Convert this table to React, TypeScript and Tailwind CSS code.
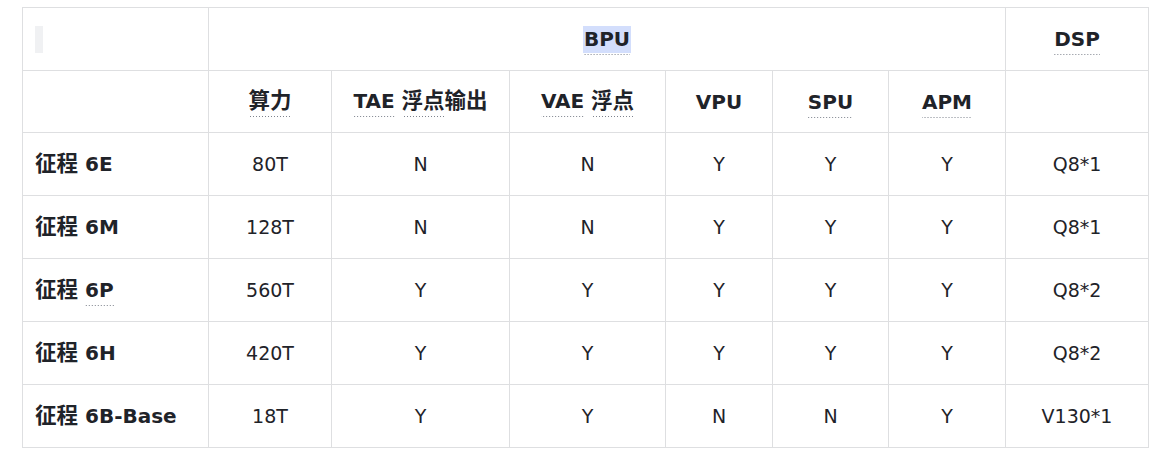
import type { ReactNode } from 'react';

// SoC spec matrix: BPU sub-units + DSP per chip.

type Row = {
  name: ReactNode;
  tops: string;
  tae: string;
  vae: string;
  vpu: string;
  spu: string;
  apm: string;
  dsp: string;
};

// the Han glyphs sit a touch larger than the Latin run in the source table
function Han({ children }: { children: ReactNode }): JSX.Element {
  return <span className="text-[21.5px]">{children}</span>;
}

function Dotted({ children }: { children: ReactNode }): JSX.Element {
  return (
    <span className="bg-[linear-gradient(to_right,#7d828c_1px,transparent_1px)] bg-[length:3px_1px] bg-bottom bg-repeat-x pb-[4px]">
      {children}
    </span>
  );
}

const chip = (suffix: ReactNode): ReactNode => (
  <>
    <Han>征程</Han> {suffix}
  </>
);

const ROWS: Row[] = [
  { name: chip('6E'), tops: '80T', tae: 'N', vae: 'N', vpu: 'Y', spu: 'Y', apm: 'Y', dsp: 'Q8*1' },
  { name: chip('6M'), tops: '128T', tae: 'N', vae: 'N', vpu: 'Y', spu: 'Y', apm: 'Y', dsp: 'Q8*1' },
  { name: chip(<Dotted>6P</Dotted>), tops: '560T', tae: 'Y', vae: 'Y', vpu: 'Y', spu: 'Y', apm: 'Y', dsp: 'Q8*2' },
  { name: chip('6H'), tops: '420T', tae: 'Y', vae: 'Y', vpu: 'Y', spu: 'Y', apm: 'Y', dsp: 'Q8*2' },
  { name: chip('6B-Base'), tops: '18T', tae: 'Y', vae: 'Y', vpu: 'N', spu: 'N', apm: 'Y', dsp: 'V130*1' },
];

const cell = 'border border-[#dedfe1] text-center align-middle';
const head = 'border border-[#dedfe1] text-center align-middle text-[20px] font-bold';

export default function App(): JSX.Element {
  return (
    <div className="min-h-[461px] bg-white pl-[22px] pt-[7px] font-['DejaVu_Sans','Noto_Sans_CJK_SC',sans-serif] text-[19px] text-[#1f2329]">
      <table className="w-[1126px] table-fixed border-collapse">
        <colgroup>
          <col className="w-[186px]" />
          <col className="w-[123px]" />
          <col className="w-[178px]" />
          <col className="w-[156px]" />
          <col className="w-[107px]" />
          <col className="w-[116px]" />
          <col className="w-[117px]" />
          <col className="w-[143px]" />
        </colgroup>
        <thead>
          <tr className="h-[63px]">
            <th className="border border-[#dedfe1] px-[12px] text-left align-middle">
              <span className="block h-[27px] w-[8px] bg-[#f0f1f3]" />
            </th>
            <th colSpan={6} className={head}>
              <span className="inline-block bg-[#d3defc] px-[1px] leading-[27px]">
                <Dotted>BPU</Dotted>
              </span>
            </th>
            <th className={head}>
              <Dotted>DSP</Dotted>
            </th>
          </tr>
          <tr className="h-[62px]">
            <th className={head} />
            <th className={head}>
              <Dotted>
                <Han>算力</Han>
              </Dotted>
            </th>
            <th className={head}>
              <Dotted>TAE</Dotted>{' '}
              <Dotted>
                <Han>浮点</Han>
              </Dotted>
              <Han>输出</Han>
            </th>
            <th className={head}>
              <Dotted>VAE</Dotted>{' '}
              <Dotted>
                <Han>浮点</Han>
              </Dotted>
            </th>
            <th className={head}>VPU</th>
            <th className={head}>
              <Dotted>SPU</Dotted>
            </th>
            <th className={head}>
              <Dotted>APM</Dotted>
            </th>
            <th className={head} />
          </tr>
        </thead>
        <tbody>
          {ROWS.map((r, i) => (
            <tr key={i} className="h-[63px]">
              <td className="border border-[#dedfe1] px-[12px] text-left align-middle text-[20px] font-bold whitespace-nowrap">
                {r.name}
              </td>
              <td className={cell}>{r.tops}</td>
              <td className={cell}>{r.tae}</td>
              <td className={cell}>{r.vae}</td>
              <td className={cell}>{r.vpu}</td>
              <td className={cell}>{r.spu}</td>
              <td className={cell}>{r.apm}</td>
              <td className={cell}>{r.dsp}</td>
            </tr>
          ))}
        </tbody>
      </table>
    </div>
  );
}
